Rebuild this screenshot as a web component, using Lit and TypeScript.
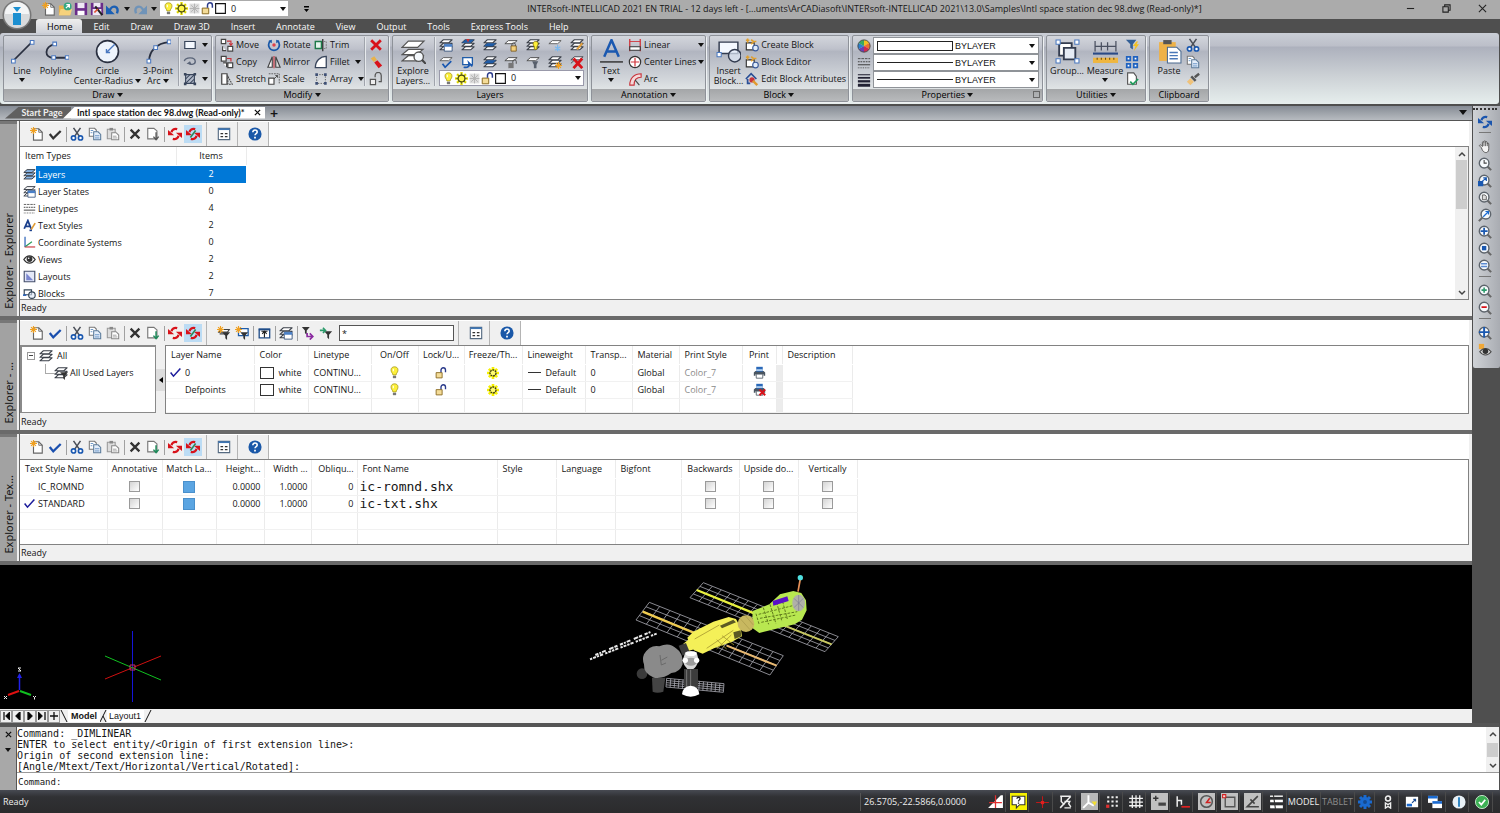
import { LitElement, html, css, svg, nothing } from "lit";
import { customElement, state } from "lit/decorators.js";
import { classMap } from "lit/directives/class-map.js";

const stack = (fill: string) => svg`
  <path d="M1 13.5 5 10h10l-4 3.5z M1 9.500 5 6h10l-4 3.500z M1 5.500 5 2h10l-4 3.500z" fill=${fill} stroke="#3a3f48" stroke-width="1.200" stroke-linejoin="round"/>`;
const lens = svg`
  <path d="M10.500 10.500 15 15" stroke="#666" stroke-width="2.400"/>
  <circle cx="7" cy="7" r="5.500" fill="#f6f9fc" stroke="#5d646c" stroke-width="1.600"/>`;
const page = svg`<path d="M4 2h6l4 4v9H4z" fill="#fff" stroke="#666" stroke-width="1.300"/><path d="M10 2v4h4" fill="none" stroke="#666"/>`;
const twoArrows = (c: string) => svg`
  <path d="M10.500 2.500C7 1.500 4.500 3 4 6" fill="none" stroke=${c} stroke-width="2.600"/><path d="M0 3.500v6h7z" fill=${c}/>
  <path d="M5.500 13.500C9 14.500 11.500 13 12 10" fill="none" stroke=${c} stroke-width="2.600"/><path d="M16 12.500v-6H9z" fill=${c}/>`;
const redArrows = twoArrows("#d8121a");
const blueArrows = twoArrows("#1b55ad");
const funnel = (x: number, y: number, c = "#333") => svg`<path transform="translate(${x} ${y})" d="M0 0h9L5.500 4v5L3.500 7V4z" fill=${c}/>`;
const spark = svg`<path d="M4 0v8M0 4h8M1.200 1.200l5.600 5.600M6.800 1.200 1.200 6.800" stroke="#f0a020" stroke-width="1.300"/>`;
const printer = svg`
  <path d="M3 6h10l2 2v4h-2v-2H3v2H1V8z" fill="#4a5560"/><path d="M4 1h8v6H4z" fill="#2a68b8"/>
  <path d="M4 4h8v2H4z" fill="#bcd8f4"/><path d="M4 10h8v5H4z" fill="#fff" stroke="#4a5560"/>`;
const smallBlocks = svg`<path d="M1.500 5.500h9v8h-9z" fill="#fff" stroke="#333" stroke-width="1.300"/><circle cx="12" cy="11.500" r="3.200" fill="#dfeaf8" stroke="#3a5a9a" stroke-width="1.300"/><path d="M1 2.500h4M3 .5v5M7 2l3 2-3 3M9 4h4" fill="none" stroke="#e0a030" stroke-width="1.800"/>`;

const GLYPHS: Record<string, unknown> = {
  new: svg`${page}<g>${spark}</g>`,
  open: svg`<path d="M1 4h5l1 2h7v9H1z" fill="#e8b24a"/><path d="M1 15 3 8h13l-2 7z" fill="#f7d27c"/><circle cx="11" cy="5" r="4.500" fill="#35a884"/><path d="M9 7l4-4m0 3.500V3H9.500" stroke="#fff" stroke-width="1.400" fill="none"/>`,
  save: svg`<path d="M1 1h14v14H1z" fill="#6a2c8a"/><path d="M4 1h8v6H4z" fill="#eee8f4"/><path d="M4 10h8v5H4z" fill="#fff"/>`,
  saveas: svg`<path d="M1 1h14v14H1z" fill="#6a2c8a"/><path d="M4 1h8v5H4z" fill="#eee8f4"/><path d="M3 8h10v7H3z" fill="#eee8f4"/><path d="m6 5 8 10" stroke="#222" stroke-width="2.400"/><path d="m5 12 4-4" stroke="#e05030" stroke-width="2"/>`,
  undo: svg`<path d="M4 10C7 2 16 5 12.500 13" fill="none" stroke="#1a5fb4" stroke-width="2.800"/><path d="M0 4v10h10z" fill="#1a5fb4"/>`,
  redo: svg`<path d="M12 10C9 2 0 5 3.500 13" fill="none" stroke="#6f93b8" stroke-width="2.800"/><path d="M16 4v10H6z" fill="#6f93b8"/>`,
  bulb: svg`<path d="M8 1C3 1 3 6 5 8.500c.6.800 1 1.500 1 2.500h4c0-1 .4-1.700 1-2.500C13 6 13 1 8 1z" fill="#fdf03a" stroke="#a89a20"/><path d="M6 12h4v3H6z" fill="#777"/><path d="M6.500 3.500v3" stroke="#fff" stroke-width="1.300"/>`,
  sun: svg`<path d="M8 0v16M0 8h16M2.500 2.500l11 11M13.500 2.500l-11 11" stroke="#f0e800" stroke-width="3"/><path d="M8 1v14M1 8h14M3.200 3.200l9.600 9.600M12.800 3.200l-9.600 9.600" stroke="#555" stroke-width=".8"/><circle cx="8" cy="8" r="4.200" fill="#fff84a" stroke="#4a4a10" stroke-width="1.500"/>`,
  sunY: svg`<path d="M8 0v16M0 8h16M2.500 2.500l11 11M13.500 2.500l-11 11" stroke="#f6f000" stroke-width="3.600"/><circle cx="8" cy="8" r="4" fill="#fffb70" stroke="#3a3a10" stroke-width="1.800" stroke-dasharray="2.500 1"/>`,
  snow: svg`<path d="M2 2h12v12H2z" fill="#dcdcdc"/><path d="M8 2v12M2 8h12M4 4l8 8M12 4l-8 8" stroke="#b4b4b4" stroke-width="1.200"/>`,
  lock: svg`<path d="M1.500 7.500h8v7h-8z" fill="#f4dc98" stroke="#8a6a20" stroke-width="1.200"/><path d="M8 7V4a3 3 0 0 1 6 0v3" fill="none" stroke="#2a3a8a" stroke-width="1.800"/>`,
  swatch: svg`<path d="M2 2h12v12H2z" fill="#fff" stroke="#111" stroke-width="1.400"/>`,
  line: svg`<path d="M3 21 21 3" stroke="#2a3040" stroke-width="1.600"/><path d="M1.500 19.500h3.500v3.500H1.500zM19.500 1.500H23V5h-3.500z" fill="#fff" stroke="#4a78c0"/>`,
  polyline: svg`<path d="M10 5C0 8 0 18 9 18h13" fill="none" stroke="#2a3040" stroke-width="1.700"/><path d="M8.500 3H12v3.500H8.500zM7.500 16H11v3.500H7.500zM20.500 16H24v3.500h-3.500z" fill="#fff" stroke="#4a78c0"/>`,
  circle: svg`<circle cx="12" cy="12" r="10.500" fill="#eef4fc" stroke="#2a3040" stroke-width="1.600"/><path d="M11 13 19 5m-8 4.500V13h3.500" fill="none" stroke="#4a78c0" stroke-width="1.300"/>`,
  arc3: svg`<path d="M3 21C3 12 10 4 22 3" fill="none" stroke="#2a3040" stroke-width="1.800"/><path d="M1 19.500h3.500V23H1zM7.500 6.500H11V10H7.500zM20.500 1H24v3.500h-3.500z" fill="#fff" stroke="#4a78c0"/>`,
  rect: svg`<path d="M2 4h12v8H2z" fill="#f4f8ff" stroke="#39465c" stroke-width="1.400"/>`,
  loop: svg`<path d="M1.500 7C3 2 14 2 14 7.500c0 4-7 4-7 1.500" fill="none" stroke="#5a6478" stroke-width="1.600"/><path d="m4 10 4-3 2 4z" fill="#5a6478"/>`,
  hatch: svg`<path d="M3 3h10v10H3z" fill="#b4bccb" stroke="#39465c" stroke-width="1.300"/><path d="m3 13 10-10M3 8l5-5M8 13l5-5" stroke="#39465c" stroke-width="1.200"/><path d="M1 1h3v3H1zM12 1h3v3h-3zM1 12h3v3H1zM12 12h3v3h-3z" fill="#39465c"/>`,
  move: svg`<path d="M1.500 1.500h5v5h-5zM9 9.500h5.500V15H9zM3 9.500v5h4" fill="#fff" stroke="#444" stroke-width="1.300"/><path d="M8 3.500h4.500V8M10.500 6l2 2.300 2-2.300" fill="none" stroke="#c8343c" stroke-width="1.300"/>`,
  copy: svg`<path d="M1.500 1.500h5.500V7H1.500zM9 9h5.500v5.500H9zM3.500 9h4v5" fill="#fff" stroke="#444" stroke-width="1.400"/><path d="M8 4h4.500v3.500" fill="none" stroke="#c8343c" stroke-width="1.400"/>`,
  stretch: svg`<path d="M2 2h6v12H2z" fill="#fff" stroke="#444" stroke-width="1.400"/><path d="M9 5l5 9H9z" fill="none" stroke="#444" stroke-width="1.200" stroke-dasharray="2 1"/>`,
  rotate: svg`<path d="M4 3C0 7 2 14 8 14s8-7 4-11" fill="none" stroke="#1a58a8" stroke-width="2"/><path d="M1.500 3.500 5.500 2v4zM14.500 3.500 10.500 2v4z" fill="#1a58a8"/><circle cx="8" cy="8" r="2" fill="#e04048"/>`,
  mirror: svg`<path d="M6 2v12H1z" fill="#fff" stroke="#444" stroke-width="1.300"/><path d="M10 2v12h5z" fill="#ddd" stroke="#444" stroke-width="1.300"/><path d="M8 1v14" stroke="#c8343c" stroke-width="1.300"/>`,
  scale: svg`<path d="M2 2h12v12" fill="none" stroke="#555" stroke-dasharray="2 1"/><path d="M2 7h6v7H2z" fill="#fff" stroke="#444" stroke-width="1.300"/><path d="m8 8 4-4M9.500 4H12v2.500" fill="none" stroke="#444"/>`,
  trim: svg`<path d="M1.500 4h7v8h-7z" fill="#e4f4ec" stroke="#1e7a4a" stroke-width="1.600"/><path d="M10 1v14" stroke="#333" stroke-width="1.500"/><path d="M11 4h3v8h-3" fill="none" stroke="#777" stroke-dasharray="2 1"/>`,
  fillet: svg`<path d="M1.500 14.500C1.500 7 7 1.500 14 1.500v13z" fill="#fff" stroke="#39465c" stroke-width="1.500"/>`,
  array: svg`<path d="M3 3h10v10H3z" fill="none" stroke="#555" stroke-dasharray="1.500 1.500"/><path d="M1.500 1.500h3v3h-3zM11.500 1.500h3v3h-3zM1.500 11.500h3v3h-3zM11.500 11.500h3v3h-3z" fill="#3d4f74"/>`,
  x: svg`<path d="m2.500 2.500 11 11M13.500 2.500l-11 11" stroke="#d8121a" stroke-width="3.200"/>`,
  eraser: svg`<path d="m2 4 4-2.500 3 4L5.500 8z" fill="#e8b24a"/><path d="M6 8.500 9.500 6l5.500 6-4 3z" fill="#d8121a"/>`,
  explode: svg`<path d="M1.500 8.500h6v6h-6z" fill="#eee" stroke="#555" stroke-width="1.300"/><path d="M7 6V4a3.500 3.500 0 0 1 7 0v7h-3" fill="none" stroke="#555" stroke-width="1.400"/>`,
  layers: svg`${stack("#fff")}`,
  explore: svg`<path d="M1 21 7 16h14l-6 5z M1 15 7 10h14l-6 5z M1 8 7 2h15l-6 6z" fill="#fff" stroke="#555" stroke-width="1.200"/><circle cx="17" cy="17" r="4.500" fill="#f4f8fc" stroke="#555" stroke-width="1.300"/><path d="m20 20 4 4" stroke="#444" stroke-width="2"/>`,
  lyState: svg`${stack("#fff")}<path d="M6 7h9v8H6z" fill="#fff" stroke="#33507a"/><path d="M6 7h9v3H6z" fill="#4a80c8"/>`,
  lyBlue: svg`${stack("#fff")}<path d="M1 5.500 5 2h10l-4 3.500z" fill="#1f5ca8"/><path d="M6 1h4l-2 4z" fill="#c33"/>`,
  lyMid: svg`${stack("#fff")}<path d="M1 9.500 5 6h10l-4 3.500z" fill="#1f5ca8"/>`,
  lyLock: svg`<path d="M1 6.500 5 3h10l-4 3.500z" fill="#fff" stroke="#444"/><path d="M8 9h6v6H8z" fill="#f3cf7a" stroke="#7a5a20"/><path d="M9 9V7.500a2 2 0 0 1 4 0V9" fill="none" stroke="#444"/>`,
  lyBulb: svg`${stack("#fff")}<path d="M11 4c-4 0-3 4-1.500 6v3h3v-3C14 8 15 4 11 4z" fill="#fdf03a" stroke="#8a7a10"/>`,
  lyFrz: svg`<path d="M1 6.500 5 3h10l-4 3.500z" fill="#fff" stroke="#555"/><path d="M11 8v7M8 10l6 4M14 10l-6 4" stroke="#7ab8ee" stroke-width="1.400"/>`,
  lyPen: svg`${stack("#fff")}<path d="m14 6-6 7" stroke="#e0a040" stroke-width="2.400"/>`,
  lyChk: svg`<path d="M1 6.500 5 3h10l-4 3.500z" fill="#fff" stroke="#555"/><path d="m4 10 3 4 7-7" fill="none" stroke="#1a58b0" stroke-width="2"/>`,
  lyPrev: svg`<path d="M2 3h11v8H2z" fill="#fff" stroke="#1f5ca8" stroke-width="1.500"/><path d="M3 14c5 1 7-1 6-5l4 4" fill="none" stroke="#1a58b0" stroke-width="2"/>`,
  lyUnl: svg`<path d="M1 6.500 5 3h10l-4 3.500z" fill="#fff" stroke="#444"/><path d="M5 9h6v6H5z" fill="#777"/><path d="M10 9V7.500a2 2 0 0 1 4 0V10" fill="none" stroke="#444"/>`,
  lyOff: svg`<path d="M1 6.500 5 3h10l-4 3.500z" fill="#fff" stroke="#444"/><path d="M7 7h7l-2 4v4H9v-4z" fill="#58606c"/>`,
  lyStar: svg`${stack("#fff")}<g transform="translate(8 8)">${spark}</g>`,
  lyDel: svg`<path d="M1 5.500 5 2h10l-4 3.500zM1 9.500 5 6" fill="#fff" stroke="#3a3f48"/><path d="m4 4 10 11M14 4 4 15" stroke="#d8121a" stroke-width="3.200"/>`,
  textA: svg`<path d="M5 17 12 1l7 16M8 12h8" fill="none" stroke="#1a58b0" stroke-width="2.400"/><path d="M1 22h22" stroke="#333" stroke-width="1.400"/>`,
  linear: svg`<path d="M2 1v14M14 1v14" stroke="#d0353c" stroke-width="1.500"/><path d="M2 4h12" stroke="#d0353c"/><path d="M2 10h12v4H2z" fill="#fff" stroke="#333" stroke-width="1.300"/>`,
  center: svg`<circle cx="8" cy="8" r="6.500" fill="#fff" stroke="#333" stroke-width="1.300"/><path d="M8 3v10M3 8h10" stroke="#d0353c" stroke-width="1.400"/>`,
  arc: svg`<path d="M2 15C2 7 7 2 15 2v4c-5 0-8 3-8 9z" fill="#f4dada" stroke="#c8343c" stroke-width="1.300"/><path d="m8 9 5 6" stroke="#444" stroke-width="1.200"/>`,
  insert: svg`<path d="M3 3h18v11H3z" fill="#f4f8ff" stroke="#333c50" stroke-width="1.400"/><path d="M1 13h4v4H1z" fill="#fff" stroke="#4a78c0"/><circle cx="18" cy="16" r="6" fill="#dfeaf8" fill-opacity=".7" stroke="#333c50" stroke-width="1.400"/>`,
  block: smallBlocks,
  attrs: svg`<path d="M1 8 7 2l6 6M3 8v5h3" fill="none" stroke="#2a4f96" stroke-width="2"/><circle cx="8" cy="9" r="3" fill="#c8343c"/><path d="m9 10 5 5" stroke="#e09a30" stroke-width="2.800"/>`,
  wheel: svg`<path d="M8 8V1a7 7 0 0 1 6.060 3.500z" fill="#f2c020"/><path d="m8 8 6.060-3.500a7 7 0 0 1 0 7z" fill="#ee7030"/><path d="m8 8 6.060 3.500A7 7 0 0 1 8 15z" fill="#d02a50"/><path d="M8 8v7a7 7 0 0 1-6.060-3.500z" fill="#6a3fb0"/><path d="m8 8-6.060 3.500a7 7 0 0 1 0-7z" fill="#2a80d0"/><path d="M8 8 1.940 4.500A7 7 0 0 1 8 1z" fill="#3aa860"/><circle cx="8" cy="8" r="7" fill="none" stroke="#444"/>`,
  ltypes: svg`<path d="M1 3h14" stroke="#444" stroke-dasharray="3 1"/><path d="M1 6.500h14" stroke="#444" stroke-dasharray="2 1" stroke-width="1.200"/><path d="M1 10h14" stroke="#444" stroke-width="1.200"/><path d="M1 13.500h14" stroke="#444" stroke-dasharray="1 1"/>`,
  lweights: svg`<path d="M1 2h14" stroke="#223" stroke-width="1.200"/><path d="M1 5.500h14" stroke="#223" stroke-width="2"/><path d="M1 9.500h14" stroke="#223" stroke-width="2.600"/><path d="M1 14h14" stroke="#223" stroke-width="3.400"/>`,
  group: svg`<path d="M4 4h12v12H4z" fill="#fff" stroke="#333c50" stroke-width="1.800"/><path d="M8.500 8.500h11v11h-11z" fill="#e4eaf4" stroke="#333c50" stroke-width="1.800"/><path d="M1 1h4v4H1zM19 1h4v4h-4zM1 19h4v4H1zM19 19h4v4h-4z" fill="#fff" stroke="#4a78c0"/>`,
  measure: svg`<path d="M2 2v10M8 3v8M14 3v8M22 2v10M2 7h20" stroke="#4a5060" stroke-width="1.200" fill="none"/><path d="M0 14h24" stroke="#2a4a86" stroke-width="2"/><path d="M0 18h24v5H0z" fill="#efb640"/><path d="M4 18v2M8 18v2M12 18v2M16 18v2M20 18v2" stroke="#6a4a10"/>`,
  qsel: svg`<path d="M1 2h12L9 7v6L6 11V7z" fill="#335f96"/><path d="m13 4-4 5h3l-2 6 6-8h-3l2-3z" fill="#f2c020"/>`,
  four: svg`<path d="M2 2h4v4H2zM10 2h4v4h-4zM2 10h4v4H2zM10 10h4v4h-4z" fill="#fff" stroke="#1f62c0" stroke-width="2"/>`,
  docchk: svg`<path d="M3 1h7l3 4v9H3z" fill="#fff" stroke="#555" stroke-width="1.300"/><path d="m6 11 3 3 6-6" fill="none" stroke="#1e9a5a" stroke-width="2"/>`,
  paste: svg`<path d="M2 3h16v18H2z" fill="#efb247"/><path d="M6 1h8v4H6z" fill="#555"/><path d="M10 8h9l4 4v11H10z" fill="#fff" stroke="#4a6a90"/><path d="M12 13h8M12 16h8M12 19h8" stroke="#4a78b8" stroke-width="1.300"/>`,
  cut: svg`<path d="M4 1 11 11M12 1 5 11" stroke="#4a4f58" stroke-width="1.800"/><circle cx="4" cy="12.500" r="2.400" fill="#fff" stroke="#1a58b0" stroke-width="1.900"/><circle cx="12" cy="12.500" r="2.400" fill="#fff" stroke="#1a58b0" stroke-width="1.900"/>`,
  copydoc: svg`<path d="M1.500 1.500h6l2 2v7h-8z" fill="#fff" stroke="#777" stroke-width="1.200"/><path d="M6.500 5.500h5l3 3v6h-8z" fill="#e4eefa" stroke="#5a7a9a" stroke-width="1.200"/><path d="M8 10h5M8 12.500h5M3 4h3M3 6.500h2" stroke="#5a8ac0"/>`,
  pastedoc: svg`<path d="M1.500 2.500h9v11h-9z" fill="#ddd" stroke="#999" stroke-width="1.200"/><path d="M4 1h4v3H4z" fill="#888"/><path d="M6.500 6.500h5l3 3v5h-8z" fill="#fff" stroke="#888" stroke-width="1.200"/><path d="M8 10.500h4M8 12.500h5" stroke="#999"/>`,
  brush: svg`<path d="m15 2-5 4" stroke="#555" stroke-width="2.800"/><path d="m7 4 5 5-2 2-5-5z" fill="#555"/><path d="m5 7 4 4-4 4-4-4z" fill="#efc27a"/>`,
  check: svg`<path d="m2 8 4 5 8.500-8.500" fill="none" stroke="#333" stroke-width="2.600"/>`,
  checkB: svg`<path d="m2 8 4 5 8.500-8.500" fill="none" stroke="#1a4fae" stroke-width="2.600"/>`,
  tick: svg`<path d="m2 8 3.500 4.500L14 3" fill="none" stroke="#1c1c9c" stroke-width="1.900"/>`,
  del: svg`<path d="m3 3 10 10M13 3 3 13" stroke="#333" stroke-width="2.600"/>`,
  docdown: svg`<path d="M2 1.500h7l3.500 3v9H2z" fill="#fff" stroke="#777" stroke-width="1.300"/><path d="M11.500 6v8m-3-3 3 3.500 3-3.500" fill="none" stroke="#555" stroke-width="1.500"/>`,
  docdownG: svg`<path d="M2 1.500h7l3.500 3v9H2z" fill="#fff" stroke="#777" stroke-width="1.300"/><path d="M11.500 6v8m-3-3 3 3.500 3-3.500" fill="none" stroke="#1e8a5a" stroke-width="1.700"/>`,
  swap: redArrows,
  swapG: svg`${redArrows}<path d="m5 12 6-8" stroke="#2a8a5a" stroke-width="1.800"/>`,
  list: svg`<path d="M1.500 1.500h13v13h-13z" fill="#fff" stroke="#556a80" stroke-width="1.300"/><path d="M1.500 2.500h13" stroke="#3f76b4" stroke-width="2"/><path d="M4 7.500h3M9 7.500h3M4 11h3M9 11h3" stroke="#333" stroke-width="1.300"/>`,
  help: svg`<circle cx="8" cy="8" r="7.500" fill="#1a58a8"/><path d="M5.500 6c0-3.500 5-3 5-.3 0 1.800-2.500 1.800-2.500 3.800" fill="none" stroke="#fff" stroke-width="1.800"/><path d="M7 11h2v2H7z" fill="#fff"/>`,
  fNew: svg`<path d="M4 4h10l-2 3H2zM3 9h6" stroke="#444" fill="#fff" stroke-width="1.300"/>${funnel(6, 7)}<g>${spark}</g>`,
  fWin: svg`<path d="M4 3h11v8H4z" fill="#fff" stroke="#1f5ca8" stroke-width="1.500"/>${funnel(6, 7)}<g>${spark}</g>`,
  fState: svg`<path d="M2.500 3.500h12v10h-12z" fill="#fff" stroke="#1f4c88" stroke-width="1.500"/><path d="M2 4h13" stroke="#1f4c88" stroke-width="2"/><path d="M5 6h7M8.500 6v7M6 9l2.500-3L11 9" stroke="#222" stroke-width="1.300" fill="none"/>`,
  fPurple: svg`${funnel(1, 1)}<path d="M7 8v4h6m-3-3.500 3.500 3.500-3.500 3.500" fill="none" stroke="#8a2aa0" stroke-width="1.900"/>`,
  fGreen: svg`${funnel(6, 6)}<path d="M1 5h6M4.500 2 7.500 5 4.500 8" fill="none" stroke="#2a9a6a" stroke-width="1.800"/>`,
  fLayers: svg`${stack("#fff")}${funnel(7, 7)}`,
  tLayers: svg`${stack("#8ab8e8")}`,
  tText: svg`<path d="M1.500 12 6 2l4 10M3 9h6" fill="none" stroke="#1a3f8c" stroke-width="2.200"/><path d="m15 5-5 8" stroke="#e09a30" stroke-width="2"/><path d="M8 14h3" stroke="#1a3f8c" stroke-width="2"/>`,
  tCoord: svg`<path d="M2.500 1v12.500" stroke="#2a62b8" stroke-width="1.500"/><path d="M2 13.500h13" stroke="#c8343c" stroke-width="1.400"/><path d="m3 13 8-6" stroke="#2a9a5a" stroke-width="1.400"/>`,
  eye: svg`<path d="M1 8c4-6 10-6 14 0-4 6-10 6-14 0z" fill="#fff" stroke="#333" stroke-width="1.500"/><circle cx="8" cy="7.500" r="3.600" fill="#333"/><circle cx="7" cy="6.500" r="1" fill="#fff"/>`,
  tLayout: svg`<path d="M1.500 1.500h13v13h-13z" fill="#e4e8f8" stroke="#444f6c" stroke-width="1.400"/><path d="M4 4v8.500h8.500z" fill="#7a86d0"/>`,
  tBlock: svg`<path d="M1.500 9.500V3.500h9v6z" fill="#fff" stroke="#345" stroke-width="1.400"/><path d="M0 10h4" stroke="#2a62b8" stroke-width="2"/><circle cx="11" cy="10" r="4" fill="#dfeaf8" fill-opacity=".6" stroke="#345" stroke-width="1.400"/>`,
  print: printer,
  noprint: svg`${printer}<path d="m8 8 7 7M15 8l-7 7" stroke="#d8121a" stroke-width="2.400"/>`,
  orbit: blueArrows,
  hand: svg`<path d="M4 9 2 7c-1-1 .5-2 1.500-1L5 7.500V3c0-1.500 1.800-1.500 1.800 0v-1c0-1.500 1.900-1.500 1.900 0v1c0-1.500 1.900-1.500 1.900 0v1.500c0-1.300 1.700-1.300 1.700 0V10c0 6-6.500 6-8.300-1z" fill="#f4f4f4" stroke="#555" stroke-width="1.100"/><path d="M6.800 3v4M8.700 3v4M10.600 4v3" stroke="#555"/>`,
  zTime: svg`${lens}<path d="M7 3.500V7h3" fill="none" stroke="#444" stroke-width="1.200"/>`,
  zPrev: svg`${lens}<path d="M0 8h6v6H0z" fill="#1a58b0"/><path d="m4 9 5-4M6 4.500h3.500V8" stroke="#1a58b0" stroke-width="1.400" fill="none"/>`,
  zDyn: svg`${lens}<path d="M5 4.500h3l1.500 1.500v4H5z" fill="#ddd" stroke="#555"/>`,
  zScale: svg`<path d="M5 11 1 15" stroke="#666" stroke-width="2.400"/><circle cx="9" cy="7" r="5.500" fill="#f6f9fc" stroke="#5d646c" stroke-width="1.600"/><path d="m6 10 6-6M8.500 4H12v3.500" fill="none" stroke="#1a6ad0" stroke-width="1.400"/>`,
  zCross: svg`${lens}<path d="M7 3v8M3 7h8" stroke="#1a58b0" stroke-width="2"/>`,
  zWin: svg`${lens}<path d="M4.500 4.500h5v5h-5z" fill="#1a58b0"/>`,
  zMinus: svg`${lens}<path d="M3.500 5.500h7M3.500 8.500h7" stroke="#5a8ad0" stroke-width="1.600"/>`,
  zIn: svg`${lens}<path d="M7 4v6M4 7h6" stroke="#2a9a6a" stroke-width="1.800"/>`,
  zOut: svg`${lens}<path d="M4 7h6" stroke="#d8121a" stroke-width="2"/>`,
  zExt: svg`${lens}<path d="M7 1v12M1 7h12" stroke="#1a58b0" stroke-width="2.200"/>`,
  eyeO: svg`<path d="M1 1h6v6H1z" fill="#f0a838"/><path d="M2 10c4-5 9-5 13 0-4 5-9 5-13 0z" fill="#ddd" stroke="#444" stroke-width="1.300"/><circle cx="8.500" cy="9.500" r="3.200" fill="#333"/>`,
  sGrad: svg`<path d="M1 14 13 2h2v12z" fill="#fff"/><path d="M8 2v12M2 9h12" stroke="#e03030" stroke-width="1.200"/>`,
  sHelp: svg`<path d="M0 0h16v16H0z" fill="#f6f000"/><path d="M2 3h12v8H9l-3 3v-3H2z" fill="#fff" stroke="#333"/><path d="M6.500 5.500c0-2 3-2 3 0 0 1-1.500 1-1.500 2.500M8 9v1" fill="none" stroke="#222" stroke-width="1.200"/>`,
  sCross: svg`<path d="M8 3v11M2 9h12" stroke="#c01818"/><path d="M6.500 7.500h3v3h-3z" fill="#e02020"/>`,
  sCut: svg`<path d="M3 3h10M4 3v5l3 3M13 3 3 14M7 8h5l-1 2 2 3M7 14h6" stroke="#eee" stroke-width="1.400" fill="none"/>`,
  sAxes: svg`<path d="M0 0h16v16H0z" fill="#b8b8b8"/><path d="M7 2v7L2 14M7 9l5 3" stroke="#fff" stroke-width="1.800" fill="none"/><path d="m10 8 5 0-2 4z" fill="#f4e030"/>`,
  sDots: svg`<path d="M3 3h2v2H3zM7 3h2v2H7zM11 3h2v2h-2zM3 7h2v2H3zM7 7h2v2H7zM11 7h2v2h-2zM7 11h2v2H7zM11 11h2v2h-2z" fill="#eee"/><path d="M2 11h3v3H2z" fill="#e03030"/>`,
  sGrid: svg`<path d="M5 2v12M8.500 2v12M12 2v12M2 5h13M2 8.500h13M2 12h13" stroke="#f2f2f2" stroke-width="1.200" fill="none"/>`,
  sDyn: svg`<path d="M0 0h16v16H0z" fill="#c0c0c0"/><path d="M2 5h5M4.500 2.500v5" stroke="#333" stroke-width="1.300"/><path d="M7 9h7v3H7z" fill="#444"/>`,
  sOrtho: svg`<path d="M3 3v10M3 7h4v4" fill="none" stroke="#eee" stroke-width="1.400"/><path d="M7 13h8" stroke="#e02020" stroke-width="1.600"/>`,
  sPolar: svg`<path d="M0 0h16v16H0z" fill="#c0c0c0"/><circle cx="8" cy="8" r="5.500" fill="none" stroke="#555" stroke-width="1.400"/><path d="M12 9H8l3-4" fill="none" stroke="#d02020" stroke-width="1.400"/>`,
  sSnap: svg`<path d="M0 0h16v16H0z" fill="#c0c0c0"/><path d="M4 4h9v9H4z" fill="none" stroke="#555" stroke-width="1.300"/><path d="M1.500 1.500h3v3h-3z" fill="#f8d0d0" stroke="#d02020"/>`,
  sAng: svg`<path d="M0 0h16v16H0z" fill="#c0c0c0"/><path d="M13 3 3 13h11M6 6l4 4" fill="none" stroke="#444" stroke-width="1.500"/>`,
  sLwt: svg`<path d="M2 3h12" stroke="#fff" stroke-width="1.300"/><path d="M2 7.500h12" stroke="#fff" stroke-width="2.400"/><path d="M2 13h12" stroke="#fff" stroke-width="2.800"/><path d="m5 1 2 14" stroke="#333"/>`,
  gear: svg`<path d="M8 0v16M0 8h16M2.300 2.300l11.400 11.400M13.700 2.300 2.300 13.700" stroke="#1a6ad0" stroke-width="3.400"/><circle cx="8" cy="8" r="5.600" fill="#1a6ad0"/><circle cx="8" cy="8" r="2.200" fill="#154a90"/>`,
  badge: svg`<circle cx="8" cy="4" r="2.800" fill="none" stroke="#eee" stroke-width="1.800"/><path d="M5 15V9l3 2 3-2v6l-3-2z" fill="none" stroke="#eee" stroke-width="1.500"/>`,
  screen: svg`<path d="M1 2h14v12H1z" fill="#fff"/><path d="M2 10h6v3H2z" fill="#1a6ad0"/><path d="M8 9l4-4M9.500 5H12v2.500" stroke="#1a4a90" fill="none" stroke-width="1.400"/>`,
  wins: svg`<path d="M0 1h11v8H0z" fill="#fff"/><path d="M0 1h11v3H0z" fill="#1a6ad0"/><path d="M5 7h11v8H5z" fill="#fff"/><path d="M5 7h11v3H5z" fill="#1a6ad0"/>`,
  info: svg`<circle cx="8" cy="8" r="7.500" fill="#e8f0f6"/><path d="M8 2.500v11" stroke="#2a82c0" stroke-width="2.200"/>`,
  ok: svg`<circle cx="8" cy="8" r="7.500" fill="#3cb054" stroke="#d4f0d8"/><path d="m4.500 8 2.700 3 4.500-5.500" fill="none" stroke="#fff" stroke-width="2"/>`,
};
const BIG = new Set(["line", "polyline", "circle", "arc3", "explore", "textA", "insert", "group", "measure", "paste"]);

const icon = (name: string, size = 14) => html`<svg class="icon" width=${size} height=${size}
  viewBox=${BIG.has(name) ? "0 0 24 24" : "0 0 16 16"} aria-hidden="true">${GLYPHS[name]}</svg>`;

type Pt = [number, number];
const mix = (a: Pt, b: Pt, t: number): Pt => [a[0] + (b[0] - a[0]) * t, a[1] + (b[1] - a[1]) * t];
/** Wireframe of a solar wing: rows x cells lines between two long edges. */
const wing = (a: Pt, b: Pt, c: Pt, d: Pt, cells: number, rows: number) => {
  let path = "";
  for (let i = 0; i <= cells; i++) {
    const p = mix(a, b, i / cells), q = mix(c, d, i / cells);
    path += `M${p[0]} ${p[1]}L${q[0]} ${q[1]}`;
  }
  for (let i = 0; i <= rows; i++) {
    const p = mix(a, c, i / rows), q = mix(b, d, i / rows);
    path += `M${p[0]} ${p[1]}L${q[0]} ${q[1]}`;
  }
  return svg`<path d=${path} fill="none" stroke="#a4a4ac" stroke-width="2.500"/>`;
};

const MENU = ["Home", "Edit", "Draw", "Draw 3D", "Insert", "Annotate", "View", "Output", "Tools", "Express Tools", "Help"];
const ITEMS: [string, string, number][] = [
  ["tLayers", "Layers", 2], ["lyState", "Layer States", 0], ["ltypes", "Linetypes", 4], ["tText", "Text Styles", 2],
  ["tCoord", "Coordinate Systems", 0], ["eye", "Views", 2], ["tLayout", "Layouts", 2], ["tBlock", "Blocks", 7],
];
const LAYER_COLS: [string, number, string][] = [
  ["Layer Name", 88, ""], ["Color", 54, ""], ["Linetype", 63, ""], ["On/Off", 47, "mid"], ["Lock/U...", 46, "mid"],
  ["Freeze/Th...", 58, "mid"], ["Lineweight", 63, ""], ["Transp...", 47, ""], ["Material", 47, ""], ["Print Style", 63, ""],
  ["Print", 34, "mid"], ["", 6, ""], ["Description", 70, ""],
];
const STYLE_COLS: [string, number, string][] = [
  ["Text Style Name", 87, ""], ["Annotative", 55, "mid"], ["Match La...", 54, "mid"], ["Height...", 48, "end"],
  ["Width ...", 47, "end"], ["Obliqu...", 46, "end"], ["Font Name", 140, ""], ["Style", 59, ""], ["Language", 59, ""],
  ["Bigfont", 66, ""], ["Backwards", 58, "mid"], ["Upside do...", 59, "mid"], ["Vertically", 59, "mid"],
];

@customElement("app-root")
export class AppRoot extends LitElement {
  @state() private selected = "Layers";

  static styles = css`
    :host { display: flex; flex-direction: column; min-height: 100vh; background: #4f4f4f; color: #151515;
      font: 9px/12px "Open Sans", "Noto Sans", sans-serif; }
    * { box-sizing: border-box; }
    button, select, input { font: inherit; color: inherit; border: 0; padding: 0; margin: 0; background: none; border-radius: 0; }
    select { appearance: none; outline: 0; }
    .icon { display: block; flex: none; }
    .caret { display: inline-block; border: 3px solid transparent; border-top: 4px solid #111; border-bottom: 0; flex: none; vertical-align: 1px; }

    .title { display: flex; align-items: center; height: 19px; background: #ababab; padding-left: 42px; position: relative; }
    .title button { display: grid; place-items: center; }
    .app { position: absolute; left: 2px; top: 0; z-index: 2; width: 30px; height: 30px; }
    .quick { display: flex; align-items: center; gap: 2px; padding-bottom: 2px; }
    .quick .narrow { width: 9px; }
    .combo { display: flex; align-items: center; background: #fff; height: 15px; padding: 0 2px; }
    .combo select { flex: 1; min-width: 0; padding-left: 4px; height: 100%; }
    .quick .combo { width: 128px; }
    .more { padding-left: 14px; }
    .name { flex: 1; text-align: center; font-size: 9px; margin: 0; font-weight: 400; padding-left: 28px; padding-bottom: 2px; white-space: nowrap; }
    .win { width: 36px; height: 17px; margin-bottom: 2px; }

    .menu { display: flex; height: 14px; padding-left: 36px; background: #4f4f4f; }
    .menu button { color: #fafafa; padding: 0 10px 0 11px; white-space: nowrap; height: 15px; line-height: 15px; }
    .menu .on { background: linear-gradient(#eee, #cdd0d7); color: #000; border-radius: 3px 3px 0 0; }

    .ribbon { display: flex; gap: 3px; height: 71px; padding: 2px 3px; border-radius: 3px; margin-right: 1px;
      background: linear-gradient(#caced6 0, #bcbfc9 18%, #adb1bd 20%, #cdd2d6 62%, #e6eeed 100%); }
    .group { display: flex; flex-direction: column; border: 1px solid #8e9299; border-radius: 2px;
      background: linear-gradient(#d3d6dc 0, #bec1cb 20%, #b1b5c0 24%, #d5d9dd 70%, #e2e6e7 84%); box-shadow: 1px 1px 0 #eef1f3; }
    .body { display: flex; flex: 1; min-height: 0; padding: 0 2px; }
    .cap { height: 12px; line-height: 11px; text-align: center; background: linear-gradient(#a4a6a8, #b8babc); white-space: nowrap; position: relative; flex: none; color: #000; }
    .corner { position: absolute; right: 2px; top: 2px; width: 7px; height: 7px; border: 1px solid #666; }
    .big { display: flex; flex-direction: column; align-items: center; padding-top: 3px; line-height: 10px; white-space: nowrap; }
    .big .icon { margin-bottom: 2px; }
    .big > .caret { margin-top: 2px; }
    .rows { display: grid; grid-auto-rows: 17px; }
    .cmd { display: flex; align-items: center; gap: 2px; white-space: nowrap; text-align: left; }
    .cmd .caret { margin-left: 3px; }
    .sep { border-left: 1px solid #a0a4ac; border-right: 1px solid #e6e9ec; width: 2px; margin: 1px 3px 3px; }
    .w32 { width: 32px; } .w34 { width: 34px; } .w36 { width: 36px; } .w67 { width: 67px; } .w47 { width: 47px; } .w40 { width: 40px; }
    .w75 { width: 75px; }
    .wide .caret { margin-left: auto; }
    .g-draw { width: 209px; } .g-modify { width: 174px; } .g-layers { width: 196px; } .g-anno { width: 115px; }
    .g-modify .body { padding-left: 4px; }
    .g-block { width: 140px; } .g-props { width: 191px; } .g-util { width: 100px; } .g-clip { width: 60px; }
    .tools { flex: 1; display: grid; grid-template-rows: repeat(3, 17px); padding-right: 1px; }
    .strip { display: flex; justify-content: space-between; align-items: center; }
    .tools .combo { border: 1px solid #99a; height: 16px; }
    .prop { display: grid; grid-template-columns: 16px 1fr; align-items: center; height: 17px; }
    .prop .combo { height: 17px; border: 1px solid #8f9398; padding: 0 3px; font: 9px/12px "Liberation Sans", sans-serif; }
    .prop .combo select { padding-left: 2px; }
    .props { flex: 1; padding: 1px 1px 0 2px; }
    .swatch { width: 76px; height: 10px; border: 1px solid #222; }
    .stroke { width: 76px; height: 1px; background: #222; }

    .mid-area { display: flex; flex: 1; margin-top: 2px; }
    .main { flex: 1; min-width: 0; display: flex; flex-direction: column; }
    .dock { width: 27px; margin-left: 1px; align-self: flex-start; background: linear-gradient(90deg, #cfd2d6, #a9acb2); padding: 2px 3px 10px 0;
      display: flex; flex-direction: column; align-items: center; border-radius: 0 0 2px 2px; }
    .dock button { height: 17px; width: 20px; display: grid; place-items: center; }
    .dock hr { width: 12px; border: 0; border-top: 1px solid #777; margin: 2px 0 5px; }
    .grip { width: 100%; border-top: 2px dotted #333; margin-bottom: 3px; }

    .docs { display: flex; align-items: center; height: 15px; padding: 0 5px 1px 5px; background: linear-gradient(#858b94, #b7bbc0); border-bottom: 1px solid #555; }
    .docs button { height: 12px; line-height: 12px; font-family: Lato, "Open Sans", sans-serif; font-weight: 700; white-space: nowrap; }
    .start { background: #606060; color: #eee; width: 66px; padding-left: 8px; clip-path: polygon(14px 0, 100% 0, 100% 100%, 0 100%); }
    .open { background: #fff; width: 202px; margin-left: -8px; padding: 0 4px 0 14px; display: flex; justify-content: space-between; align-items: center; clip-path: polygon(12px 0, 100% 0, 100% 100%, 0 100%); }
    .add { font-size: 14px; width: 18px; }
    .docs .caret { margin-left: auto; border-width: 4px; border-top-width: 5px; border-bottom: 0; }

    .pane { display: flex; background: #f0f0f0; border-bottom: 4px solid #6a6a6a; }
    .side { width: 17px; background: #a2a2a2; border-top: 3px solid #777; display: flex; align-items: flex-end; justify-content: center; padding-bottom: 7px; margin-right: 2px; }
    .side span { writing-mode: vertical-rl; transform: rotate(180deg); font-size: 11px; line-height: 14px; white-space: nowrap; font-family: "Noto Sans", sans-serif; }
    .content { flex: 1; min-width: 0; display: flex; flex-direction: column; border-left: 1px solid #666; margin-right: 3px; }
    .bar { display: flex; height: 25px; background: #fff; padding-top: 1px; }
    .seg { display: flex; align-items: center; background: #f0f0f0; padding: 0 4px 0 8px; border-right: 1px solid #b4b4b4; }
    .seg button { width: 18px; height: 18px; display: grid; place-items: center; }
    .seg .held { background: #bcdcf4; }
    .bs { width: 1px; height: 15px; background: #a0a0a0; margin: 0 1px 0 2px; }
    .filter { width: 115px; height: 16px; border: 1px solid #555; background: #fff; margin-left: 4px; padding: 0 2px; }
    .box { background: #fff; border: 1px solid #828282; border-left: 0; display: flex; overflow: hidden; flex: none; }
    .tall { height: 154px; } .short { height: 69px; } .medium { height: 86px; }
    .state { height: 16px; line-height: 16px; padding-left: 1px; }

    table { border-collapse: collapse; table-layout: fixed; width: 0; align-self: flex-start; flex: none; }
    th, td { height: 17px; padding: 0 5px; font-weight: 400; text-align: left; white-space: nowrap; border-right: 1px solid #ebebeb; border-bottom: 1px solid #f1f1f1; overflow: hidden; line-height: 12px; }
    th { height: 18px; border-bottom-color: #fff; }
    .items td { border: 0; padding: 0; }
    .items .num { text-align: center; }
    .items tr { cursor: default; }
    .items .cell { display: flex; align-items: center; height: 17px; padding-left: 3px; }
    .items .cell span { padding-left: 2px; flex: 1; line-height: 17px; }
    .items .sel span, .items .sel .num { background: #0078d7; color: #fff; }
    .fillx { flex: 1; }
    .mid { text-align: center; padding: 0; } .end { text-align: right; padding: 0 3px; }
    .mid .icon { margin: 0 auto; }
    .line { display: flex; align-items: center; gap: 5px; }
    .chip { width: 14px; height: 12px; border: 1px solid #333; background: #fff; }
    .dash { width: 13px; height: 1px; background: #333; }
    .grey { color: #8a8a8a; }
    .rail { background: #ececec; padding: 0; }
    .shx { font: 13px/14px "DejaVu Sans Mono", monospace; padding: 0 2px; }
    .lead { width: 13px; flex: none; }
    .names td:first-child, .layers td:first-child { padding-left: 3px; }
    .names td:first-child .line { gap: 2px; } .layers td:first-child .line { gap: 3px; }
    .layers .blank { height: 14px; }
    .tickbox { appearance: none; display: block; width: 11px; height: 11px; margin: 0 auto; border: 1px solid #9a9a9a; background: linear-gradient(135deg, #d4d4d4, #fff); }
    .tickbox:checked { width: 12px; height: 12px; background: #5ba5e2; border-color: #4a90cc; }

    .scroll { width: 13px; background: #f0f0f0; display: flex; flex-direction: column; justify-content: space-between; align-items: center; }
    .scroll .thumb { width: 11px; height: 49px; background: #cdcdcd; }
    .scroll .space { flex: 1; }
    .scroll button { height: 13px; display: grid; place-items: center; }
    .split { display: flex; }
    .tree { width: 136px; height: 68px; border: 2px solid #8a8a8a; border-width: 2px 1px 1px 2px; background: #fff; padding: 0 5px; }
    .node { display: flex; align-items: center; height: 17px; gap: 4px; }
    .exp { width: 8px; height: 8px; border: 1px solid #999; display: grid; place-items: center; }
    .exp::before { content: ""; width: 4px; height: 1px; background: #444; }
    .child { padding-left: 18px; position: relative; gap: 2px; }
    .child::before { content: ""; position: absolute; left: 18px; top: 0; width: 9px; height: 9px; border-left: 1px solid #aaa; border-bottom: 1px solid #aaa; }
    .child .icon { margin-left: 9px; }
    .fold { width: 9px; height: 22px; background: #ddd; align-self: center; display: grid; place-items: center; }
    .grow { flex: 1; border-left: 1px solid #828282; }

    .view { flex: 1; min-height: 100px; background: #000; display: flex; }
    .view svg { width: 100%; height: 100%; display: block; }
    .sheets { display: flex; align-items: center; height: 14px; background: #f0f0f0; font: 9px/12px "Liberation Sans", sans-serif; }
    .sheets .nav { width: 12px; height: 13px; border: 1px solid #999; display: grid; place-items: center; }
    .sheets .tab { height: 12px; padding: 0 3px 0 2px; background: #fff; }
    .sheets .tab.on { font-weight: 700; padding: 0 3px; }

    .cmdline { display: flex; background: #fff; border-top: 4px solid #555; height: 67px; margin-right: 1px; }
    .strip-l { width: 16px; background: #a8a8a8; display: flex; flex-direction: column; align-items: center; gap: 10px; padding-top: 4px; }
    .log { flex: 1; display: flex; flex-direction: column; border-left: 1px solid #555; }
    .hist { display: flex; flex: 1; border-bottom: 1px solid #999; }
    .hist pre { flex: 1; margin: 0; padding-top: 1px; font: 10px/11px "DejaVu Sans Mono", monospace; }
    .hist .scroll .thumb { height: 14px; }
    .ask { display: flex; height: 18px; align-items: center; font: 9px/12px "DejaVu Sans Mono", monospace; padding-left: 1px; }
    .ask input { flex: 1; outline: 0; }

    .status { display: flex; align-items: center; height: 23px; background: linear-gradient(#474a52, #303134 30%, #2b2b2c); color: #eee; padding: 0 7px 0 3px; }
    .ready { flex: 1; }
    .coords { width: 126px; border-left: 1px solid #555; padding-left: 3px; height: 18px; line-height: 18px; }
    .modes { display: flex; justify-content: space-between; width: 301px; }
    .status button { height: 20px; min-width: 20px; display: grid; place-items: center; border-right: 1px solid #4a4a4a; }
    .status .word { width: 34px; }
    .off { color: #8c8c8c; }
    .apps { display: flex; justify-content: space-between; width: 138px; }
  `;

  private combo(label: string) {
    return html`<div class="combo">${["bulb", "sun", "snow", "lock", "swatch"].map((n) => icon(n, 13))}
      <select aria-label=${label}><option>0</option></select><i class="caret"></i></div>`;
  }
  private big(glyph: string, width: string, lines: string[], drop = false) {
    const last = lines.length - 1;
    return html`<button class="big ${width}">${icon(glyph, 25)}
      ${lines.map((l, i) => html`<span>${l}${drop && i === last && last > 0 ? html` <i class="caret"></i>` : nothing}</span>`)}
      ${drop && last === 0 ? html`<i class="caret"></i>` : nothing}</button>`;
  }
  private cmd(glyph: string, label = "", drop = false, cls = "") {
    return html`<button class="cmd ${cls}" aria-label=${label || glyph}>${icon(glyph)}${label ? html`<span>${label}</span>` : nothing}${drop ? html`<i class="caret"></i>` : nothing}</button>`;
  }
  private group(cls: string, caption: string, body: unknown, drop = true, corner = false) {
    return html`<section class="group ${cls}"><div class="body">${body}</div>
      <div class="cap">${caption}${drop ? html` <i class="caret"></i>` : nothing}${corner ? html`<i class="corner"></i>` : nothing}</div></section>`;
  }
  private btn(glyph: string, held = false) {
    return html`<button class=${classMap({ held })} aria-label=${glyph}>${icon(glyph)}</button>`;
  }
  private toolbar(colored: boolean, filters = false) {
    const s = html`<i class="bs"></i>`;
    return html`<div class="bar">
      <div class="seg">${this.btn("new")}${this.btn(colored ? "checkB" : "check")}${s}${this.btn("cut")}${this.btn("copydoc")}${this.btn("pastedoc")}${s}
        ${this.btn("del")}${this.btn(colored ? "docdownG" : "docdown")}${s}${this.btn("swap")}${this.btn("swapG", true)}</div>
      ${filters ? html`<div class="seg">${this.btn("fNew")}${this.btn("fWin")}${s}${this.btn("fState")}${s}${this.btn("lyState")}${s}${this.btn("fPurple")}${this.btn("fGreen")}
        <input class="filter" aria-label="Layer filter" value="*"></div>` : nothing}
      <div class="seg">${this.btn("list")}</div><div class="seg">${this.btn("help")}</div></div>`;
  }
  private chevron(up: boolean) {
    return html`<button aria-label=${up ? "Scroll up" : "Scroll down"}><svg width="8" height="6" viewBox="0 0 8 6"><path d=${up ? "M1 5 4 2l3 3" : "M1 1l3 3 3-3"} fill="none" stroke="#444" stroke-width="1.500"/></svg></button>`;
  }
  private head(cols: [string, number, string][]) {
    return html`<colgroup>${cols.map((c) => html`<col style="width:${c[1]}px">`)}</colgroup>
      <thead><tr>${cols.map((c) => html`<th class=${c[2]}>${c[0]}</th>`)}</tr></thead>`;
  }
  private layerRow(name: string, current: boolean) {
    return html`<tr><td><div class="line"><span class="lead">${current ? icon("tick", 13) : nothing}</span>${name}</div></td>
      <td><div class="line"><i class="chip"></i>white</div></td><td>CONTINU...</td>
      <td class="mid">${icon("bulb", 13)}</td><td class="mid">${icon("lock", 12)}</td><td class="mid">${icon("sunY", 12)}</td>
      <td><div class="line"><i class="dash"></i>Default</div></td><td>0</td><td>Global</td><td class="grey">Color_7</td>
      <td class="mid">${icon(current ? "print" : "noprint", 13)}</td><td class="rail"></td><td></td></tr>`;
  }
  private tickbox(label: string, on = false) {
    return html`<td class="mid"><input class="tickbox" type="checkbox" aria-label=${label} ?checked=${on}></td>`;
  }
  private styleRow(name: string, font: string, current: boolean) {
    return html`<tr><td><div class="line"><span class="lead">${current ? icon("tick", 13) : nothing}</span>${name}</div></td>
      ${this.tickbox("Annotative")}${this.tickbox("Match layout", true)}<td class="end">0.0000</td><td class="end">1.0000</td><td class="end">0</td>
      <td class="shx">${font}</td><td></td><td></td><td></td>${this.tickbox("Backwards")}${this.tickbox("Upside down")}${this.tickbox("Vertically")}</tr>`;
  }
  private blanks(n: number, cols: number, cls = "") {
    return Array.from({ length: n }, () => html`<tr>${Array.from({ length: cols }, (_, i) => html`<td class="${cls} ${cls && i === 11 ? "rail" : ""}"></td>`)}</tr>`);
  }

  private drawing() {
    return html`<svg viewBox="0 0 1472 144" preserveAspectRatio="xMidYMid slice" role="img" aria-label="Model view">
      <path d="M132.500 66v71" stroke="#1414d8"/><path d="m105 114 56-23" stroke="#d01010"/><path d="m105 91 56 24" stroke="#10c020"/>
      <path d="M130 100h5v5h-5z" fill="none" stroke="#c03070"/>
      <path d="M19.500 125v-15" stroke="#2020e8" stroke-width="1.500"/><path d="m17 113 2.500-5 2.500 5z" fill="#2020e8"/>
      <path d="m19 126-11 4" stroke="#e01010" stroke-width="2"/><path d="m20 126 11 4" stroke="#10c020" stroke-width="2"/>
      <path d="M18 106h3l-3-3h3M4 131l3 3m0-3-3 3M33 131l1.500 1.500 1.500-1.500M34.500 132.500v2" stroke="#eee" fill="none"/>
      <g transform="translate(560 0) scale(.3333)">
        ${wing([430, 53], [835, 215], [390, 98], [795, 260], 15, 4)}
        <path d="M410 75 590 148" stroke="#e8f040" stroke-width="7"/><path d="M650 173 815 238" stroke="#c8c860" stroke-width="6"/>
        ${wing([268, 112], [670, 272], [228, 165], [630, 330], 13, 4)}
        <path d="M248 140 410 207" stroke="#f0cc50" stroke-width="7"/><path d="M500 242 650 302" stroke="#e8b870" stroke-width="6"/>
        ${wing([320, 340], [492, 356], [318, 366], [490, 382], 14, 4)}
        <path d="m578 138 50-20 32-30 40-10 24 6 14 22 2 30-14 28-22 14-58 14-48 12-22-16z" fill="#b8e850"/>
        <path d="m596 148 110-28M600 160l112-20M604 172l104-22M610 128l16 50M630 118l18 58M650 112l16 58M668 110l14 52M588 146l10 34" stroke="#5f7a1c" stroke-width="3" stroke-dasharray="8 4" fill="none"/>
        <path d="m638 108 44-14 4 14-46 14z" fill="#5a10c8"/>
        <ellipse cx="716" cy="114" rx="19" ry="25" fill="#b0b0a8"/><path d="m702 100 28 28M730 100l-28 28M716 90v48" stroke="#7c7c90" stroke-width="2"/>
        <path d="m714 80 7-38" stroke="#e89058" stroke-width="5"/><circle cx="721" cy="38" r="8" fill="#50e0e0"/>
        <path d="m400 200 60-30 46-14 22 6 14 26 4 26-30 16-54 20-34 16-26-10-14-22-6-16z" fill="#f4f058"/>
        <path d="m400 212-30 24 14 22 22-6z" fill="#f4f058"/>
        <path d="m480 182 40-18 8 8-42 18zM520 202l22-6 2 18-20 8z" fill="#5c5a24"/><path d="m404 222 74-42M440 250l80-54M470 252l44-42M486 212l36 28M470 224l30 28" stroke="#a89a30" stroke-width="2.500"/>
        <circle cx="558" cy="176" r="25" fill="#c8b860"/><path d="m540 160 30 34M556 152l24 28" stroke="#a89848" stroke-width="2"/>
        <path d="m356 242 22-8 10 24-20 14z" fill="#3c3c3c"/>
        <circle cx="246" cy="326" r="16" fill="#3a3a3a"/><path d="M276 338h40l-6 42q-18 6-32 0z" fill="#444"/>
        <path d="M252 268q18-30 46-24 30-14 50 6 22 14 20 48-8 24-34 26-24 18-52 14-32-12-30-40-6-16 0-30z" fill="#8a8a8a"/>
        <path d="m300 270 4 30 14-6M304 286l18-10" stroke="#6a6a6a" stroke-width="3" fill="none"/>
        <path d="M372 312h42v56h-42z" fill="#3c3c3c"/><path d="M380 314v52M392 314v52" stroke="#777" stroke-width="3"/>
        <path d="M376 262q16-6 34 0l6 24q-6 20-16 26h-18q-12-12-14-26z" fill="#d8d8d8"/><ellipse cx="393" cy="290" rx="18" ry="12" fill="#9c9c9c"/><circle cx="376" cy="286" r="8" fill="#fff"/><circle cx="410" cy="286" r="8" fill="#fff"/><ellipse cx="393" cy="266" rx="16" ry="7" fill="#fff"/>
        <path d="M366 388q2-24 26-26 24 2 26 26-26 14-52 0z" fill="#fff"/>
        <path d="M106 270 274 200" stroke="#e8e8e8" stroke-width="6" stroke-dasharray="10 3 6 3 12 11 14 3 10 8"/>
        <path d="M90 283 290 206" stroke="#e8e8e8" stroke-width="6" stroke-dasharray="7 3 9 3 7 3 10 7"/>
      </g></svg>`;
  }

  render() {
    return html`
      <header class="title">
        <button class="app" aria-label="Application menu"><svg width="30" height="30" viewBox="0 0 30 30"><circle cx="15" cy="15" r="14.500" fill="#777"/><circle cx="15" cy="15" r="13" fill="#d8dadc"/><path d="M3 14a12 12 0 0 1 24 0z" fill="#f4f5f6"/><path d="M11 7h8l-4 5z" fill="#1c8fd0"/><path d="M11 13h8v12h-8z" fill="#1c8fd0"/></svg></button>
        <div class="quick">
          ${["new", "open", "save", "saveas", "undo"].map((n) => html`<button aria-label=${n}>${icon(n)}</button>`)}
          <button class="narrow" aria-label="Undo list"><i class="caret"></i></button>
          <button aria-label="redo">${icon("redo")}</button>
          <button class="narrow" aria-label="Redo list"><i class="caret"></i></button>
          ${this.combo("Current layer")}
          <span class="more"><svg width="5" height="6" viewBox="0 0 5 6"><path d="M0 0h5v1.500H0zM0 3h5L2.500 6z"/></svg></span>
        </div>
        <h1 class="name">INTERsoft-INTELLICAD 2021 EN TRIAL - 12 days left - [...uments\\ArCADiasoft\\INTERsoft-INTELLICAD 2021\\13.0\\Samples\\Intl space station dec 98.dwg (Read-only)*]</h1>
        ${[["Minimize", "M1 5h8"], ["Restore", "M1 3h6v6H1zM3 3V1h6v6H7"], ["Close", "m1 1 8 8M9 1 1 9"]].map(([l, d]) => html`<button class="win" aria-label=${l}><svg width="9" height="9" viewBox="0 0 10 10"><path d=${d} fill="none" stroke="#222" stroke-width="1.200"/></svg></button>`)}
      </header>
      <nav class="menu">${MENU.map((m, i) => html`<button class=${classMap({ on: i === 0 })}>${m}</button>`)}</nav>
      <div class="ribbon">
        ${this.group("g-draw", "Draw", html`${this.big("line", "w32", ["Line"], true)}${this.big("polyline", "w36", ["Polyline"])}
          ${this.big("circle", "w67", ["Circle", "Center-Radius"], true)}${this.big("arc3", "w34", ["3-Point", "Arc"], true)}<i class="sep"></i>
          <div class="rows">${["rect", "loop", "hatch"].map((n) => this.cmd(n, "", true))}</div>`)}
        ${this.group("g-modify", "Modify", html`
          <div class="rows w47">${this.cmd("move", "Move")}${this.cmd("copy", "Copy")}${this.cmd("stretch", "Stretch")}</div>
          <div class="rows w47">${this.cmd("rotate", "Rotate")}${this.cmd("mirror", "Mirror")}${this.cmd("scale", "Scale")}</div>
          <div class="rows w47">${this.cmd("trim", "Trim")}${this.cmd("fillet", "Fillet", true)}${this.cmd("array", "Array", true)}</div><i class="sep"></i>
          <div class="rows">${["x", "eraser", "explode"].map((n) => this.cmd(n))}</div>`)}
        ${this.group("g-layers", "Layers", html`${this.big("explore", "w36", ["Explore", "Layers..."])}<i class="sep"></i>
          <div class="tools"><div class="strip">${["lyState", "lyBlue", "lyMid", "lyLock", "lyBulb", "lyFrz", "lyPen"].map((n) => this.cmd(n))}</div>
          <div class="strip">${["lyChk", "lyPrev", "lyMid", "lyUnl", "lyOff", "lyStar", "lyDel"].map((n) => this.cmd(n))}</div>${this.combo("Layer")}</div>`, false)}
        ${this.group("g-anno", "Annotation", html`${this.big("textA", "w34", ["Text"], true)}
          <div class="rows wide w75">${this.cmd("linear", "Linear", true)}${this.cmd("center", "Center Lines", true)}${this.cmd("arc", "Arc")}</div>`)}
        ${this.group("g-block", "Block", html`${this.big("insert", "w34", ["Insert", "Block..."])}
          <div class="rows">${this.cmd("block", "Create Block")}${this.cmd("block", "Block Editor")}${this.cmd("attrs", "Edit Block Attributes")}</div>`)}
        ${this.group("g-props", "Properties", html`<div class="props">${[["wheel", "Color", "swatch"], ["ltypes", "Linetype", "stroke"], ["lweights", "Lineweight", "stroke"]].map(([g, l, c]) => html`
          <div class="prop">${icon(g)}<div class="combo"><i class=${c}></i><select aria-label=${l}><option>BYLAYER</option></select><i class="caret"></i></div></div>`)}</div>`, true, true)}
        ${this.group("g-util", "Utilities", html`${this.big("group", "w36", ["Group..."])}${this.big("measure", "w40", ["Measure"], true)}
          <div class="rows">${["qsel", "four", "docchk"].map((n) => this.cmd(n))}</div>`)}
        ${this.group("g-clip", "Clipboard", html`${this.big("paste", "w34", ["Paste"])}<div class="rows">${["cut", "copydoc", "brush"].map((n) => this.cmd(n))}</div>`, false)}
      </div>
      <div class="mid-area">
        <main class="main">
          <div class="docs"><button class="start">Start Page</button><button class="open">Intl space station dec 98.dwg (Read-only)*
            <svg width="7" height="7" viewBox="0 0 8 8"><path d="m1 1 6 6M7 1 1 7" stroke="#111" stroke-width="1.500"/></svg></button>
            <button class="add" aria-label="New drawing">+</button><i class="caret"></i></div>
          <section class="pane"><div class="side"><span>Explorer - Explorer</span></div><div class="content">${this.toolbar(false)}
            <div class="box tall"><table class="items"><colgroup><col style="width:156px"><col style="width:70px"></colgroup>
              <thead><tr><th>Item Types</th><th class="mid">Items</th></tr></thead>
              <tbody>${ITEMS.map(([g, n, c]) => html`<tr class=${classMap({ sel: n === this.selected })} @click=${() => (this.selected = n)}>
                <td><div class="cell">${icon(g, 13)}<span>${n}</span></div></td><td class="num">${c}</td></tr>`)}</tbody></table>
              <div class="fillx"></div><div class="scroll">${this.chevron(true)}<i class="thumb"></i><i class="space"></i>${this.chevron(false)}</div></div>
            <div class="state">Ready</div></div></section>
          <section class="pane"><div class="side"><span>Explorer - ...</span></div><div class="content">${this.toolbar(true, true)}
            <div class="split"><div class="tree"><div class="node"><i class="exp"></i>${icon("layers")}All</div><div class="node child">${icon("fLayers")}All Used Layers</div></div>
              <button class="fold" aria-label="Collapse tree"><svg width="4" height="6" viewBox="0 0 4 6"><path d="M4 0v6L0 3z"/></svg></button>
              <div class="box short grow"><table class="layers">${this.head(LAYER_COLS)}<tbody>${this.layerRow("0", true)}${this.layerRow("Defpoints", false)}${this.blanks(1, 13, "blank")}</tbody></table></div></div>
            <div class="state">Ready</div></div></section>
          <section class="pane"><div class="side"><span>Explorer - Tex...</span></div><div class="content">${this.toolbar(true)}
            <div class="box medium"><table class="names">${this.head(STYLE_COLS)}<tbody>${this.styleRow("IC_ROMND", "ic-romnd.shx", false)}${this.styleRow("STANDARD", "ic-txt.shx", true)}${this.blanks(2, 13)}</tbody></table></div>
            <div class="state">Ready</div></div></section>
          <div class="view">${this.drawing()}</div>
          <div class="sheets">
            ${["M2 0v8M8 0 4 4l4 4z", "M6 0 2 4l4 4z", "M2 0l4 4-4 4z", "M0 0l4 4-4 4zM7 0v8", "M4 0v8M0 4h8"].map((d, i) => html`<button class="nav" aria-label="Sheet ${i}"><svg width="8" height="8" viewBox="0 0 8 8"><path d=${d} stroke="#111" stroke-width="1.300"/></svg></button>`)}
            <svg width="8" height="12" viewBox="0 0 8 12"><path d="M1 0 7 12" stroke="#111"/></svg><button class="tab on">Model</button>
            <svg width="7" height="12" viewBox="0 0 7 12"><path d="M6 0 0 12M3 6l3 6" fill="none" stroke="#111"/></svg><button class="tab">Layout1</button>
            <svg width="8" height="12" viewBox="0 0 8 12"><path d="M7 0 1 12" stroke="#111"/></svg></div>
        </main>
        <aside class="dock"><i class="grip"></i>
          ${["orbit", "|", "hand", "zTime", "zPrev", "zDyn", "zScale", "zCross", "zWin", "zMinus", "|", "zIn", "zOut", "|", "zExt", "eyeO"].map((n) => n === "|" ? html`<hr>` : html`<button aria-label=${n}>${icon(n)}</button>`)}
        </aside>
      </div>
      <section class="cmdline"><div class="strip-l"><svg width="7" height="7" viewBox="0 0 8 8"><path d="m1 1 6 6M7 1 1 7" stroke="#111" stroke-width="1.500"/></svg><i class="caret"></i></div>
        <div class="log"><div class="hist"><pre>Command: _DIMLINEAR
ENTER to select entity/&lt;Origin of first extension line&gt;:
Origin of second extension line:
[Angle/Mtext/Text/Horizontal/Vertical/Rotated]:</pre><div class="scroll">${this.chevron(true)}<i class="thumb"></i>${this.chevron(false)}</div></div>
        <label class="ask">Command:<input type="text"></label></div></section>
      <footer class="status"><span class="ready">Ready</span><span class="coords">26.5705,-22.5866,0.0000</span>
        <div class="modes">${["sGrad", "sHelp", "sCross", "sCut", "sAxes", "sDots", "sGrid", "sDyn", "sOrtho", "sPolar", "sSnap", "sAng", "sLwt"].map((n) => html`<button aria-label=${n}>${icon(n, 17)}</button>`)}</div>
        <button class="word">MODEL</button><button class="word off">TABLET</button>
        <div class="apps">${["gear", "badge", "screen", "wins", "info", "ok"].map((n) => html`<button aria-label=${n}>${icon(n)}</button>`)}</div></footer>`;
  }
}
